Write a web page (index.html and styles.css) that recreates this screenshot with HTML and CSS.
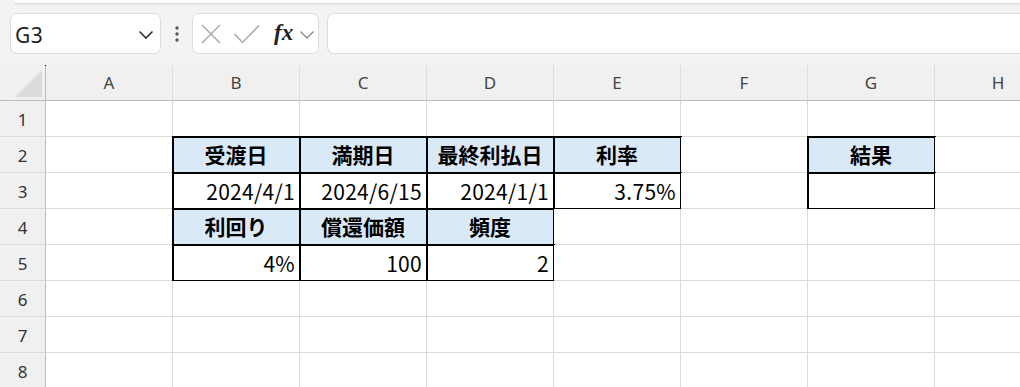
FILE: index.html
```html
<!DOCTYPE html>
<html lang="ja">
<head>
<meta charset="utf-8">
<link rel="stylesheet" href="styles.css">
</head>
<body>
<div class="app">
  <div class="topstrip"></div>
  <div class="toolbar">
    <div class="namebox">
      <span class="nametext">G3</span>
      <svg class="chev" width="16" height="10" viewBox="0 0 16 10"><polyline points="1.5,1.5 8,8 14.5,1.5" fill="none" stroke="#333" stroke-width="1.6"/></svg>
    </div>
    <div class="dots">
      <svg width="6" height="16" viewBox="0 0 6 16"><circle cx="3" cy="2" r="1.7" fill="#555"/><circle cx="3" cy="8" r="1.7" fill="#555"/><circle cx="3" cy="14" r="1.7" fill="#555"/></svg>
    </div>
    <div class="fbox">
      <svg class="ico-x" width="22" height="22" viewBox="0 0 22 22"><line x1="2" y1="2" x2="20" y2="20" stroke="#a8a8a8" stroke-width="1.5"/><line x1="20" y1="2" x2="2" y2="20" stroke="#a8a8a8" stroke-width="1.5"/></svg>
      <svg class="ico-check" width="28" height="22" viewBox="0 0 28 22"><polyline points="1.5,11 9.5,19.5 26,2.5" fill="none" stroke="#a8a8a8" stroke-width="1.5"/></svg>
      <span class="fx">fx</span>
      <svg class="chev2" width="16" height="10" viewBox="0 0 16 10"><polyline points="1.5,1.5 8,8 14.5,1.5" fill="none" stroke="#8a8a8a" stroke-width="1.4"/></svg>
    </div>
    <div class="input"></div>
  </div>
  <div class="sheet">
    <div class="c corner"><svg width="46" height="35" viewBox="0 0 46 35"><polygon points="15,32 42,5 42,32" fill="#dcdcdc"/></svg></div>
    <div class="c ch">A</div><div class="c ch">B</div><div class="c ch">C</div><div class="c ch">D</div><div class="c ch">E</div><div class="c ch">F</div><div class="c ch">G</div><div class="c ch">H</div>

    <div class="c rh">1</div><div class="c"></div><div class="c"></div><div class="c"></div><div class="c"></div><div class="c"></div><div class="c"></div><div class="c"></div><div class="c"></div>

    <div class="c rh">2</div><div class="c"></div>
    <div class="c b hd">受渡日</div><div class="c b hd">満期日</div><div class="c b hd">最終利払日</div><div class="c b hd">利率</div>
    <div class="c"></div><div class="c b hd">結果</div><div class="c"></div>

    <div class="c rh">3</div><div class="c"></div>
    <div class="c b num">2024/4/1</div><div class="c b num">2024/6/15</div><div class="c b num">2024/1/1</div><div class="c b num">3.75%</div>
    <div class="c"></div><div class="c b"></div><div class="c"></div>

    <div class="c rh">4</div><div class="c"></div>
    <div class="c b hd">利回り</div><div class="c b hd">償還価額</div><div class="c b hd">頻度</div>
    <div class="c"></div><div class="c"></div><div class="c"></div><div class="c"></div>

    <div class="c rh">5</div><div class="c"></div>
    <div class="c b num">4%</div><div class="c b num">100</div><div class="c b num">2</div>
    <div class="c"></div><div class="c"></div><div class="c"></div><div class="c"></div>

    <div class="c rh">6</div><div class="c"></div><div class="c"></div><div class="c"></div><div class="c"></div><div class="c"></div><div class="c"></div><div class="c"></div><div class="c"></div>
    <div class="c rh">7</div><div class="c"></div><div class="c"></div><div class="c"></div><div class="c"></div><div class="c"></div><div class="c"></div><div class="c"></div><div class="c"></div>
    <div class="c rh">8</div><div class="c"></div><div class="c"></div><div class="c"></div><div class="c"></div><div class="c"></div><div class="c"></div><div class="c"></div><div class="c"></div>
  </div>
</div>
</body>
</html>
```

FILE: styles.css
```css
html, body {
  margin: 0;
  padding: 0;
  background: #f3f3f3;
  overflow: hidden;
}
.app {
  width: 1020px;
  height: 387px;
  overflow: hidden;
  background: #f3f3f3;
  font-family: "Noto Sans CJK JP", "Noto Sans", sans-serif;
}
.topstrip {
  height: 3px;
  margin-left: 14px;
  background: #ffffff;
  border-bottom: 1px solid #dedede;
  border-bottom-left-radius: 6px;
  box-shadow: 0 1px 2px rgba(0,0,0,0.06);
}
.toolbar {
  display: flex;
  align-items: center;
  height: 41px;
  padding: 9px 0 11px 10px;
}
.namebox {
  box-sizing: border-box;
  width: 151px;
  height: 41px;
  background: #fff;
  border: 1px solid #dcdcdc;
  border-radius: 7px;
  display: flex;
  align-items: center;
  justify-content: space-between;
  padding: 0 6px 0 4px;
}
.nametext {
  font-family: "Noto Sans", "Liberation Sans", sans-serif;
  font-size: 21px;
  color: #1f1f1f;
  letter-spacing: 0.5px;
  margin-top: 2px;
}
.chev { display: block; margin-top: 2px; }
.dots {
  width: 31px;
  display: flex;
  justify-content: center;
}
.dots svg { display: block; }
.fbox {
  box-sizing: border-box;
  width: 127px;
  height: 41px;
  background: #fff;
  border: 1px solid #dcdcdc;
  border-radius: 7px;
  display: flex;
  align-items: center;
  padding-left: 7px;
}
.fbox svg { display: block; }
.ico-x { margin-right: 11px; }
.ico-check { margin-right: 13px; }
.fx {
  font-family: "Liberation Serif", "DejaVu Serif", serif;
  font-style: italic;
  font-weight: bold;
  font-size: 23px;
  color: #222;
  line-height: 1;
  margin-right: 6px;
  margin-top: -3px;
}
.chev2 { margin-top: 2px; }
.input {
  flex: 1;
  box-sizing: border-box;
  height: 41px;
  margin-left: 8px;
  background: #fff;
  border: 1px solid #dcdcdc;
  border-right: none;
  border-radius: 7px 0 0 7px;
}
.sheet {
  display: grid;
  grid-template-columns: 46px repeat(8, 127px);
  grid-auto-rows: 36px;
  background: #fff;
  width: 1062px;
}
.c {
  box-sizing: border-box;
  border-right: 1px solid #dadada;
  border-bottom: 1px solid #dadada;
  background: #fff;
  color: #000;
  font-size: 21px;
  line-height: 35px;
  white-space: nowrap;
  padding: 0 4px;
}
.corner {
  position: relative;
  background: #f0f0f0;
  border-right: 1px solid #bcbcbc;
  border-bottom: 1px solid #bcbcbc;
  padding: 0;
}
.corner svg { display: block; }
.corner::after {
  content: "";
  position: absolute;
  right: -1px;
  top: 0;
  width: 1px;
  height: 1px;
  background: #000;
}
.ch {
  background: #f0f0f0;
  border-bottom: 1px solid #bcbcbc;
  border-right: 1px solid #dcdcdc;
  text-align: center;
  font-family: "Noto Sans", "Liberation Sans", sans-serif;
  font-size: 17px;
  color: #444;
  line-height: 35px;
}
.rh {
  background: #f0f0f0;
  border-right: 1px solid #bcbcbc;
  border-bottom: 1px solid #dcdcdc;
  text-align: center;
  font-family: "Noto Sans", "Liberation Sans", sans-serif;
  font-size: 17px;
  color: #333;
  padding: 0;
  line-height: 37px;
}
.b {
  outline: 2px solid #000;
  outline-offset: -1px;
}
.hd {
  background: #dae9f8;
  font-weight: bold;
  text-align: center;
  padding: 0 2px;
}
.num {
  text-align: right;
  padding-right: 4px;
  line-height: 37px;
  letter-spacing: 0.3px;
}
```
